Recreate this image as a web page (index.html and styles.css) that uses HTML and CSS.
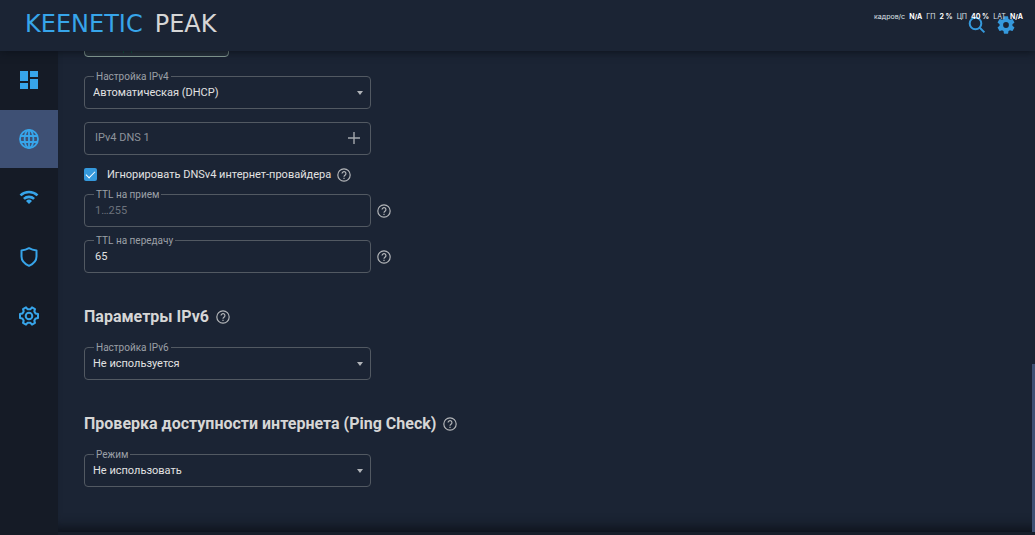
FILE: index.html
```html
<!DOCTYPE html>
<html lang="ru">
<head>
<meta charset="utf-8">
<title>Keenetic Peak</title>
<link rel="stylesheet" href="styles.css">
</head>
<body>
<svg class="sprite" aria-hidden="true">
  <symbol id="help" viewBox="0 0 24 24"><circle cx="12" cy="12" r="10.6" fill="none" stroke="currentColor" stroke-width="2"/><path d="M8.7 9.6a3.3 3.3 0 1 1 5.4 2.5c-1.2 1-2.1 1.5-2.1 3" fill="none" stroke="currentColor" stroke-width="2"/><path d="M11 16.6h2v2.2h-2z" fill="currentColor"/></symbol>
  <symbol id="caret" viewBox="0 0 6 4"><path d="M0 0h6L3 4z" fill="currentColor"/></symbol>
</svg>
<div class="app">
  <header class="header">
    <a class="logo" href="#"><span class="brand">KEENETIC</span><span>PEAK</span></a>
    <div class="actions">
      <button class="icon-button" aria-label="Поиск"><svg width="18" height="18" viewBox="0 0 18 18" fill="none" stroke="currentColor" stroke-width="2"><circle cx="7.5" cy="7.5" r="5.8"/><path d="M11.8 11.8l4.6 4.6"/></svg></button>
      <button class="icon-button" aria-label="Настройки"><svg width="18" height="18" viewBox="2 2 20 20"><path fill="currentColor" d="M19.14 12.94c.04-.3.06-.61.06-.94s-.02-.64-.07-.94l2.03-1.58a.49.49 0 0 0 .12-.61l-1.92-3.32a.49.49 0 0 0-.59-.22l-2.39.96a7 7 0 0 0-1.62-.94l-.36-2.54a.48.48 0 0 0-.48-.41h-3.84a.48.48 0 0 0-.47.41l-.36 2.54c-.59.24-1.13.57-1.62.94l-2.39-.96a.48.48 0 0 0-.59.22L2.74 8.87a.48.48 0 0 0 .12.61l2.03 1.58a7 7 0 0 0 0 1.88l-2.03 1.58a.49.49 0 0 0-.12.61l1.92 3.32c.12.22.37.29.59.22l2.39-.96c.5.38 1.03.7 1.62.94l.36 2.54c.05.24.24.41.48.41h3.84c.24 0 .44-.17.47-.41l.36-2.54a7 7 0 0 0 1.62-.94l2.39.96c.22.08.47 0 .59-.22l1.92-3.32a.48.48 0 0 0-.12-.61zM12 15.2a3.2 3.2 0 1 1 0-6.4 3.2 3.2 0 0 1 0 6.4z"/></svg></button>
    </div>
    <div class="stats"><span>кадров/с</span><b>N/A</b><span>ГП</span><b>2 %</b><span>ЦП</span><b>40 %</b><span>LAT</span><b>N/A</b></div>
  </header>
  <div class="body">
    <nav class="sidebar">
      <a class="nav-item" href="#" aria-label="Панель"><svg width="20" height="20" viewBox="0 0 20 20" fill="currentColor"><path d="M1 1h8v10H1zM11 1h8v6h-8zM1 13h8v6H1zM11 9h8v10h-8z"/></svg></a>
      <a class="nav-item active" href="#" aria-label="Интернет"><svg width="20" height="20" viewBox="0 0 20 20" fill="none" stroke="currentColor" stroke-width="1.8"><circle cx="10" cy="10" r="9"/><ellipse cx="10" cy="10" rx="4.4" ry="9"/><path d="M10 1v18M2 7h16M2 13h16"/></svg></a>
      <a class="nav-item" href="#" aria-label="Wi-Fi"><svg width="20" height="20" viewBox="0 0 20 20" fill="none" stroke="currentColor" stroke-width="2.6"><path d="M1.500 7.400a12.400 12.400 0 0 1 17 0M4.900 10.900a7.400 7.400 0 0 1 10.200 0"/><path d="M10 16L7 13a4.300 4.300 0 0 1 6 0z" fill="currentColor" stroke="none"/></svg></a>
      <a class="nav-item" href="#" aria-label="Безопасность"><svg width="20" height="20" viewBox="0 0 20 20" fill="none" stroke="currentColor" stroke-width="2" stroke-linejoin="round"><path d="M10 1.200c2.200 1.300 4.600 2 7.500 2.200v6.100c0 4.400-3 7.400-7.500 9.300-4.500-1.900-7.500-4.900-7.500-9.300V3.400C5.400 3.200 7.800 2.500 10 1.200z"/></svg></a>
      <a class="nav-item" href="#" aria-label="Управление"><svg width="20" height="20" viewBox="0 0 20 20" fill="none" stroke="currentColor" stroke-width="2" stroke-linejoin="round"><path d="M7 1.400L8.500 3.200H11.500L13 1.400L16 3.100L15.300 5.400L16.700 7.600L19 8V12L16.700 12.400L15.300 14.600L16 16.900L13 18.600L11.500 16.800H8.500L7 18.600L4 16.900L4.700 14.600L3.300 12.400L1 12V8L3.300 7.600L4.700 5.400L4 3.100z"/><circle cx="10" cy="10" r="3.300"/></svg></a>
    </nav>
    <main class="main">
      <form class="form">
        <button class="connect" type="button" aria-label="Подключено"></button>
        <div class="field">
          <label for="ipv4">Настройка IPv4</label>
          <select id="ipv4"><option>Автоматическая (DHCP)</option></select>
          <svg class="caret"><use href="#caret"/></svg>
        </div>
        <div class="field">
          <input id="dns" class="dns" type="text" placeholder="IPv4 DNS 1" aria-label="IPv4 DNS 1">
          <button class="add" type="button" aria-label="Добавить"><svg width="12" height="12" viewBox="0 0 12 12" stroke="currentColor" stroke-width="1.4"><path d="M6 0v12M0 6h12"/></svg></button>
        </div>
        <div class="check-row">
          <input id="ignore" type="checkbox" checked>
          <label for="ignore">Игнорировать DNSv4 интернет-провайдера</label>
          <svg class="help"><use href="#help"/></svg>
        </div>
        <div class="row">
          <div class="field">
            <label for="ttl-in">TTL на прием</label>
            <input id="ttl-in" class="dim" type="text" placeholder="1…255">
          </div>
          <svg class="help"><use href="#help"/></svg>
        </div>
        <div class="row">
          <div class="field">
            <label for="ttl-out">TTL на передачу</label>
            <input id="ttl-out" type="text" value="65">
          </div>
          <svg class="help"><use href="#help"/></svg>
        </div>
        <h2>Параметры IPv6 <svg class="help"><use href="#help"/></svg></h2>
        <div class="field">
          <label for="ipv6">Настройка IPv6</label>
          <select id="ipv6"><option>Не используется</option></select>
          <svg class="caret"><use href="#caret"/></svg>
        </div>
        <h2>Проверка доступности интернета (Ping Check) <svg class="help"><use href="#help"/></svg></h2>
        <div class="field">
          <label for="mode">Режим</label>
          <select id="mode"><option>Не использовать</option></select>
          <svg class="caret"><use href="#caret"/></svg>
        </div>
      </form>
      <div class="thumb"></div>
    </main>
  </div>
</div>
</body>
</html>
```
FILE: styles.css
```css
* { box-sizing: border-box; }
body { margin: 0; background: #1b2434; color: #e2e2e2; font: 11px/16px Roboto, sans-serif; }
button, input, select { font: inherit; color: inherit; }
.sprite { display: none; }
.app { display: flex; flex-direction: column; height: 100vh; overflow: hidden; }

.header { position: relative; z-index: 1; display: flex; flex: none; align-items: center; justify-content: space-between; height: 51px; padding: 0 19px 2px 25px; background: #1b2434; box-shadow: 0 1px 8px #0d121b; }
.logo { display: flex; gap: 12px; margin-bottom: 2px; color: #d6d6d6; font: 24px/24px "DejaVu Sans", sans-serif; text-decoration: none; }
.brand { color: #37a5ea; }
.actions { display: flex; gap: 9px; }
.icon-button { display: flex; align-items: center; justify-content: center; width: 20px; height: 20px; padding: 0; border: 0; background: none; color: #3599dc; }
.stats { position: absolute; top: 12px; right: 12px; display: flex; gap: 4px; color: #dfe2e6; font: 7px/10px Inter, sans-serif; white-space: nowrap; }
.stats b { color: #fff; }

.body { display: flex; flex: 1; min-height: 0; }
.sidebar { flex: none; width: 58px; background: #151b26; }
.nav-item { display: flex; align-items: center; justify-content: center; height: 58px; margin-bottom: 1px; color: #37a5ea; }
.nav-item.active { background: #3e5074; }

.main { display: flex; flex: 1; justify-content: space-between; overflow: hidden; box-shadow: inset 0 -14px 12px -9px #0e131c; border-bottom: 3px solid #171e2b; }
.form { display: flex; flex-direction: column; align-items: flex-start; gap: 13px; margin-top: -26px; padding-left: 26px; }
.connect { position: relative; flex: none; width: 145px; height: 32px; margin-bottom: 6px; padding: 0; border: 1px solid #8fa69c; border-radius: 4px; background: #29343f; }
.connect::before { position: absolute; top: 20px; left: 38px; width: 7px; height: 7px; border: solid #0b6748; border-width: 0 1px; content: ""; }
.field { position: relative; flex: none; width: 287px; }
.field input, .field select { display: block; width: 100%; height: 33px; margin: 0; padding: 0 10px; border: 1px solid #525962; border-radius: 4px; outline: 0; background: #1b2434; appearance: none; }
.field select { padding: 0 8px; }
.field .dns { padding: 0 10px 3px; }
.field label { position: absolute; top: -5px; left: 10px; padding: 0 2px; background: #1b2434; color: #9ba0a7; font-size: 10px; line-height: 11px; }
.field input::placeholder { color: #8d939b; opacity: 1; }
.field .dim::placeholder { color: #6c727c; }
.caret { position: absolute; top: 15px; right: 8px; width: 6px; height: 4px; color: #b0b3b8; pointer-events: none; }
.add { position: absolute; top: 6px; right: 7px; display: flex; align-items: center; justify-content: center; width: 20px; height: 20px; padding: 0; border: 0; background: none; color: #a4a8ad; }
.help { flex: none; width: 14px; height: 14px; color: #b4b6b9; }
.row { display: flex; flex: none; align-items: center; gap: 6px; }
.check-row { display: flex; flex: none; align-items: center; gap: 6px; height: 13px; }
.check-row input { display: grid; place-items: center; width: 13px; height: 13px; margin: 0 4px 0 0; border-radius: 2px; background: #3599dc; appearance: none; }
.check-row input::after { width: 8px; height: 4px; margin-bottom: 2px; border: solid #fff; border-width: 0 0 1px 1px; content: ""; transform: rotate(-45deg); }
h2 { display: flex; flex: none; align-items: center; gap: 7px; margin: 19px 0 5px; color: #d6d6d6; font-size: 16px; line-height: 24px; }
.thumb { align-self: flex-end; width: 3px; height: 35%; background: #3e5074; }
```
